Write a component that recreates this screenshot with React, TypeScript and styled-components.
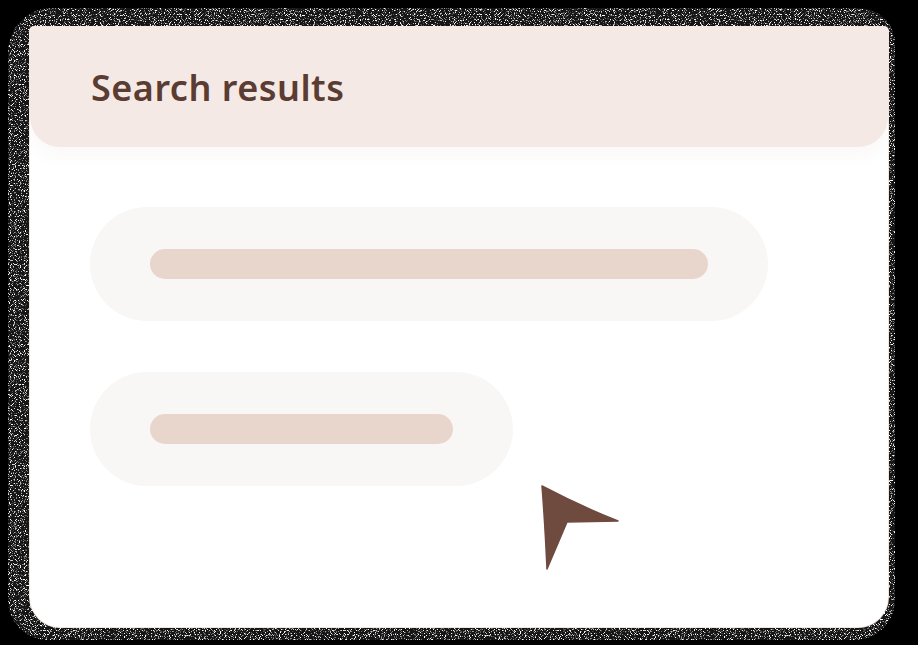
import React from "react";
import styled, { createGlobalStyle } from "styled-components";

const noise = `url("data:image/svg+xml;utf8,${encodeURIComponent(
  "<svg xmlns='http://www.w3.org/2000/svg' width='300' height='300'><filter id='n'><feTurbulence type='fractalNoise' baseFrequency='1.2' numOctaves='1' stitchTiles='stitch'/><feColorMatrix values='0 0 0 0 1  0 0 0 0 1  0 0 0 0 1  7 0 0 0 -3.8'/></filter><rect width='100%' height='100%' filter='url(#n)'/></svg>"
)}")`;

const Global = createGlobalStyle`
  html, body { margin: 0; padding: 0; background: #000; }
  body { width: 918px; height: 645px; overflow: hidden; }
`;

const Page = styled.div`
  width: 918px;
  height: 645px;
  box-sizing: border-box;
  padding: 8px 23px 5px 8px;
  background: #000;
`;

const Frame = styled.div`
  height: 100%;
  box-sizing: border-box;
  padding: 19px 7px 13px 22px;
  border-radius: 44px 36px 40px 40px;
  background-color: #151515;
  background-image: ${noise};
`;

const Card = styled.div`
  height: 100%;
  box-sizing: border-box;
  background: #fff;
  border-radius: 4px 4px 30px 30px;
  box-shadow: 0 0 0 1px #f3e6df;
  display: flex;
  flex-direction: column;
  overflow: hidden;
`;

const Header = styled.div`
  height: 120px;
  flex: none;
  box-sizing: border-box;
  background: #f5e9e6;
  border-radius: 4px 4px 30px 30px;
  box-shadow: 0 8px 18px rgba(120, 80, 60, 0.04);
  display: flex;
  align-items: center;
  padding-left: 61px;
  padding-top: 2px;
`;

const Title = styled.h1`
  margin: 0;
  font-family: "Noto Sans", "Open Sans", sans-serif;
  font-weight: 600;
  font-size: 36px;
  line-height: 1;
  letter-spacing: 0.5px;
  color: #5b3c32;
`;

const Body = styled.div`
  position: relative;
  flex: 1;
  display: flex;
  flex-direction: column;
  align-items: flex-start;
  gap: 51px;
  padding: 60px 0 0 60px;
`;

const Pill = styled.div<{ $w: number }>`
  width: ${(p) => p.$w}px;
  height: 114px;
  border-radius: 57px;
  background: #f9f7f6;
  box-sizing: border-box;
  padding: 0 60px;
  display: flex;
  align-items: center;
`;

const Bar = styled.div`
  flex: 1;
  height: 30px;
  border-radius: 15px;
  background: #e8d6cd;
`;

const Cursor = styled.svg`
  position: absolute;
  left: 510px;
  top: 337px;
`;

export default function App() {
  return (
    <>
      <Global />
      <Page>
        <Frame>
          <Card>
            <Header>
              <Title>Search results</Title>
            </Header>
            <Body>
              <Pill $w={678}>
                <Bar />
              </Pill>
              <Pill $w={423}>
                <Bar />
              </Pill>
              <Cursor width="90" height="90" viewBox="0 0 90 90">
                <path
                  d="M2 2 Q40 22 78 37 L27 38 L7 85 Q5 40 2 2 Z"
                  fill="#6f4a3f"
                  stroke="#6f4a3f"
                  strokeWidth="1.5"
                  strokeLinejoin="round"
                />
              </Cursor>
            </Body>
          </Card>
        </Frame>
      </Page>
    </>
  );
}
